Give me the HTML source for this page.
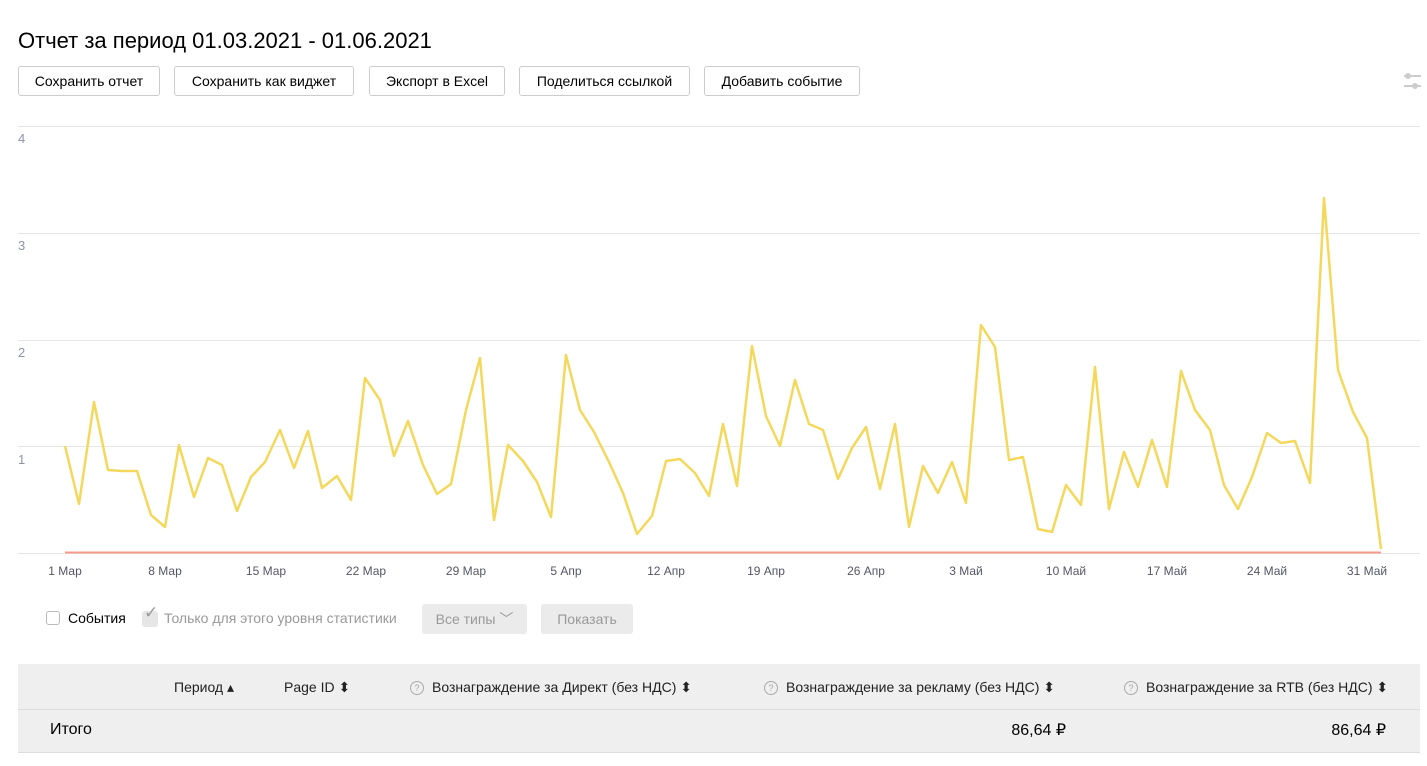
<!DOCTYPE html>
<html><head><meta charset="utf-8"><style>
body{margin:0;width:1427px;height:766px;background:#fff;font-family:"Liberation Sans",sans-serif;color:#000;position:relative;overflow:hidden}
.a{position:absolute}
h1{position:absolute;left:18px;top:28px;margin:0;font-weight:400;font-size:22px}
.btn{position:absolute;top:66px;height:30px;border:1px solid #ccc;border-radius:3px;box-sizing:border-box;font-size:14px;line-height:28px;text-align:center;background:#fff}
.yl{position:absolute;left:18px;font-size:13px;color:#8d93a8}
.xl{position:absolute;top:564px;font-size:12px;color:#556;transform:translateX(-50%)}
.th{position:absolute;top:679px;font-size:14px;color:#222}
.q{display:inline-block;width:12px;height:12px;border:1px solid #aaa;border-radius:50%;font-size:9px;line-height:12px;text-align:center;color:#aaa;margin-right:8px;vertical-align:1px}
</style></head><body>
<h1>Отчет за период 01.03.2021 - 01.06.2021</h1>
<div class="btn" style="left:18px;width:142px">Сохранить отчет</div>
<div class="btn" style="left:174px;width:180px">Сохранить как виджет</div>
<div class="btn" style="left:369px;width:136px">Экспорт в Excel</div>
<div class="btn" style="left:519px;width:171px">Поделиться ссылкой</div>
<div class="btn" style="left:704px;width:156px">Добавить событие</div>
<svg class="a" style="left:1400px;top:70px" width="24" height="24"><line x1="4" y1="6" x2="21" y2="6" stroke="#ccc" stroke-width="2"/><circle cx="8" cy="6" r="3" fill="#ccc"/><line x1="4" y1="16" x2="21" y2="16" stroke="#ccc" stroke-width="2"/><circle cx="15" cy="16" r="3" fill="#ccc"/></svg>
<svg class="a" style="left:0;top:0" width="1427" height="600">
<g stroke="#e6e6e6" stroke-width="1"><line x1="18" y1="126.5" x2="1420" y2="126.5"/><line x1="18" y1="233.5" x2="1420" y2="233.5"/><line x1="18" y1="340.5" x2="1420" y2="340.5"/><line x1="18" y1="446.5" x2="1420" y2="446.5"/><line x1="18" y1="553.5" x2="1420" y2="553.5"/></g>
<line x1="65" y1="552.5" x2="1381" y2="552.5" stroke="#f59a8a" stroke-width="2"/>
<polyline fill="none" stroke="#f4d85c" stroke-width="2.5" stroke-linejoin="round" points="65,446 79,504 94,402 108,470 122,471 137,471 151,515 165,527 179,445 194,497 208,458 222,465 237,511 251,477 265,462 280,430 294,468 308,431 322,488 337,476 351,500 365,378 380,400 394,456 408,421 423,465 437,494 451,484 466,410 480,358 494,520 508,445 523,461 537,482 551,517 566,355 580,410 594,432 609,462 623,493 637,534 652,516 666,461 680,459 695,473 709,496 723,424 737,486 752,346 766,416 780,446 795,380 809,424 823,430 838,479 852,448 866,427 880,489 895,424 909,527 923,466 938,493 952,462 966,503 981,325 995,347 1009,460 1023,457 1038,529 1052,532 1066,485 1081,505 1095,367 1109,509 1124,452 1138,487 1152,440 1167,487 1181,371 1195,410 1210,430 1224,485 1238,509 1252,477 1267,433 1281,443 1295,441 1310,483 1324,198 1338,370 1353,412 1367,438 1381,549"/>
</svg>
<div class="yl" style="top:131px">4</div><div class="yl" style="top:238px">3</div><div class="yl" style="top:345px">2</div><div class="yl" style="top:452px">1</div>
<div class="xl" style="left:65px">1 Мар</div><div class="xl" style="left:165px">8 Мар</div><div class="xl" style="left:266px">15 Мар</div><div class="xl" style="left:366px">22 Мар</div><div class="xl" style="left:466px">29 Мар</div><div class="xl" style="left:566px">5 Апр</div><div class="xl" style="left:666px">12 Апр</div><div class="xl" style="left:766px">19 Апр</div><div class="xl" style="left:866px">26 Апр</div><div class="xl" style="left:966px">3 Май</div><div class="xl" style="left:1066px">10 Май</div><div class="xl" style="left:1167px">17 Май</div><div class="xl" style="left:1267px">24 Май</div><div class="xl" style="left:1367px">31 Май</div>
<div class="a" style="left:46px;top:611px;width:14px;height:14px;border:1px solid #bbb;border-radius:3px;box-sizing:border-box"></div>
<div class="a" style="left:68px;top:610px;font-size:14px">События</div>
<div class="a" style="left:142px;top:611px;width:16px;height:16px;background:#e6e6e6;border-radius:3px"></div>
<div class="a" style="left:144px;top:603px;font-size:17px;color:#999">✓</div>
<div class="a" style="left:164px;top:610px;font-size:14px;color:#999">Только для этого уровня статистики</div>
<div class="a" style="left:422px;top:604px;width:105px;height:30px;background:#ebebeb;border-radius:3px;font-size:14px;color:#999;line-height:30px;text-align:center">Все типы ﹀</div>
<div class="a" style="left:541px;top:604px;width:92px;height:30px;background:#ebebeb;border-radius:3px;font-size:14px;color:#999;line-height:30px;text-align:center">Показать</div>
<div class="a" style="left:18px;top:664px;width:1402px;height:45px;background:#efefef;border-bottom:1px solid #ddd"></div>
<div class="a" style="left:18px;top:710px;width:1402px;height:42px;background:#efefef;border-bottom:1px solid #ddd"></div>
<div class="th" style="left:174px">Период ▴</div>
<div class="th" style="left:284px">Page ID ⬍</div>
<div class="th" style="left:410px"><span class="q">?</span>Вознаграждение за Директ (без НДС) ⬍</div>
<div class="th" style="left:764px"><span class="q">?</span>Вознаграждение за рекламу (без НДС) ⬍</div>
<div class="th" style="left:1124px"><span class="q">?</span>Вознаграждение за RTB (без НДС) ⬍</div>
<div class="a" style="left:50px;top:721px;font-size:16px">Итого</div>
<div class="a" style="left:1000px;top:720px;font-size:16px;width:66px;text-align:right">86,64 ₽</div>
<div class="a" style="left:1320px;top:720px;font-size:16px;width:66px;text-align:right">86,64 ₽</div>
</body></html>
